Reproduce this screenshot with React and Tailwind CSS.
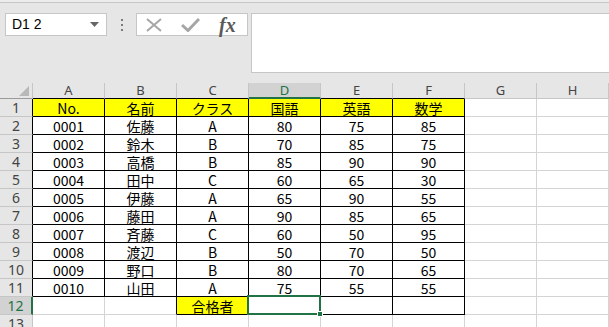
import React from "react";

const cols = ["A", "B", "C", "D", "E", "F", "G", "H"];
const data = [
  ["No.", "名前", "クラス", "国語", "英語", "数学"],
  ["0001", "佐藤", "A", "80", "75", "85"],
  ["0002", "鈴木", "B", "70", "85", "75"],
  ["0003", "高橋", "B", "85", "90", "90"],
  ["0004", "田中", "C", "60", "65", "30"],
  ["0005", "伊藤", "A", "65", "90", "55"],
  ["0006", "藤田", "A", "90", "85", "65"],
  ["0007", "斉藤", "C", "60", "50", "95"],
  ["0008", "渡辺", "B", "50", "70", "50"],
  ["0009", "野口", "B", "80", "70", "65"],
  ["0010", "山田", "A", "75", "55", "55"],
  ["", "", "合格者", "", "", ""],
  ["", "", "", "", "", ""],
];

function Cell({ r, c, text }) {
  const inTable = r >= 1 && r <= 11 && c <= 5;
  const rightBlack = inTable || (r === 12 && c >= 1 && c <= 5);
  const bottomBlack = inTable || (r === 12 && c >= 2 && c <= 5);
  const yellow = r === 1 && c <= 5 ? true : r === 12 && c === 2;
  const cls =
    "relative box-border flex h-[18px] w-[72px] shrink-0 items-end justify-center border-r border-b text-[14px] text-black " +
    (rightBlack ? "border-r-black " : "border-r-[#d4d4d4] ") +
    (bottomBlack ? "border-b-black " : "border-b-[#d4d4d4] ") +
    (yellow ? "bg-[#ffff00]" : "bg-white");
  return (
    <div className={cls}>
      {text && <span className="block h-[16px] overflow-visible leading-[16px]">{text}</span>}
      {r === 12 && c === 3 && (
        <div className="absolute left-[-2px] top-[-2px] z-10 h-[20px] w-[74px] border-2 border-[#217346]">
          <div className="absolute bottom-[-4px] right-[-4px] h-[6px] w-[6px] border border-white bg-[#217346]" />
        </div>
      )}
    </div>
  );
}

export default function App() {
  return (
    <div
      className="h-[327px] w-[609px] overflow-hidden bg-[#e6e6e6]"
      style={{ fontFamily: '"Noto Sans CJK JP", "Noto Sans", sans-serif' }}
    >
      <div className="h-[2px] bg-[#ececec]" />
      <div className="h-[1px] bg-[#c6c6c6]" />
      <div className="flex h-[80px] items-start pt-[10px]">
        <div className="ml-[5px] flex h-[23px] w-[102px] items-center justify-between border border-[#c6c6c6] bg-white pl-[6px] pr-[7px]">
          <span
            className="text-[14px] text-black"
            style={{ fontFamily: '"Liberation Sans", sans-serif' }}
          >
            D1 2
          </span>
          <svg width="9" height="5" viewBox="0 0 9 5">
            <path d="M0 0 L9 0 L4.5 5 Z" fill="#666" />
          </svg>
        </div>
        <div className="ml-[14px] flex h-[23px] flex-col items-center justify-center gap-[3px]">
          <div className="h-[2px] w-[2px] bg-[#7a7a7a]" />
          <div className="h-[2px] w-[2px] bg-[#7a7a7a]" />
          <div className="h-[2px] w-[2px] bg-[#7a7a7a]" />
        </div>
        <div className="ml-[13px] flex h-[23px] w-[112px] items-center border border-[#c6c6c6] bg-white pl-[9px]">
          <svg width="16" height="14" viewBox="0 0 16 14">
            <path d="M1 1 L15 13 M15 1 L1 13" stroke="#a6a6a6" strokeWidth="2" />
          </svg>
          <svg width="19" height="14" viewBox="0 0 19 14" className="ml-[19px]">
            <path d="M1 7 L7 12.5 L18 1" stroke="#a6a6a6" strokeWidth="3" fill="none" />
          </svg>
          <span
            className="ml-[19px] text-[20px] font-bold italic leading-none text-[#595959]"
            style={{ fontFamily: '"Liberation Serif", "DejaVu Serif", serif' }}
          >
            fx
          </span>
        </div>
        <div className="ml-[3px] h-[60px] flex-1 border-t border-b border-l border-[#c6c6c6] bg-white" />
      </div>
      <div className="flex h-[16px]">
        <div className="relative box-border h-[16px] w-[33px] shrink-0 border-r border-b border-r-[#c6c6c6] border-b-[#9b9b9b] bg-[#e6e6e6]">
          <svg width="10" height="10" viewBox="0 0 10 10" className="absolute bottom-[2px] right-[3px]">
            <path d="M10 0 L10 10 L0 10 Z" fill="#b8b8b8" />
          </svg>
        </div>
        {cols.map((c, i) => {
          const sel = c === "D";
          return (
            <div
              key={c}
              className={
                "box-border flex h-[16px] w-[72px] shrink-0 items-center justify-center border-r text-[13px] leading-none " +
                (sel
                  ? "border-b-2 border-r-[#c6c6c6] border-b-[#217346] bg-[#d2d2d2] text-[#217346]"
                  : "border-b border-r-[#c6c6c6] bg-[#e6e6e6] text-[#444] " +
                    (i <= 5 ? "border-b-black" : "border-b-[#c6c6c6]"))
              }
              style={{ fontFamily: '"Noto Sans", sans-serif' }}
            >
              {c}
            </div>
          );
        })}
      </div>
      {data.map((row, ri) => {
        const r = ri + 1;
        const sel = r === 12;
        return (
          <div key={r} className="flex h-[18px]">
            <div
              className={
                "box-border flex h-[18px] w-[33px] shrink-0 items-center justify-center border-b text-[14px] leading-none " +
                (sel
                  ? "border-r-2 border-r-[#217346] border-b-[#c6c6c6] bg-[#d2d2d2] text-[#217346]"
                  : "border-r border-b-[#c6c6c6] bg-[#e6e6e6] text-[#444] " +
                    (r <= 11 ? "border-r-black" : "border-r-[#c6c6c6]"))
              }
              style={{ fontFamily: '"Noto Sans", sans-serif' }}
            >
              {r}
            </div>
            {[...row, "", ""].map((t, ci) => (
              <Cell key={ci} r={r} c={ci} text={t} />
            ))}
          </div>
        );
      })}
    </div>
  );
}
